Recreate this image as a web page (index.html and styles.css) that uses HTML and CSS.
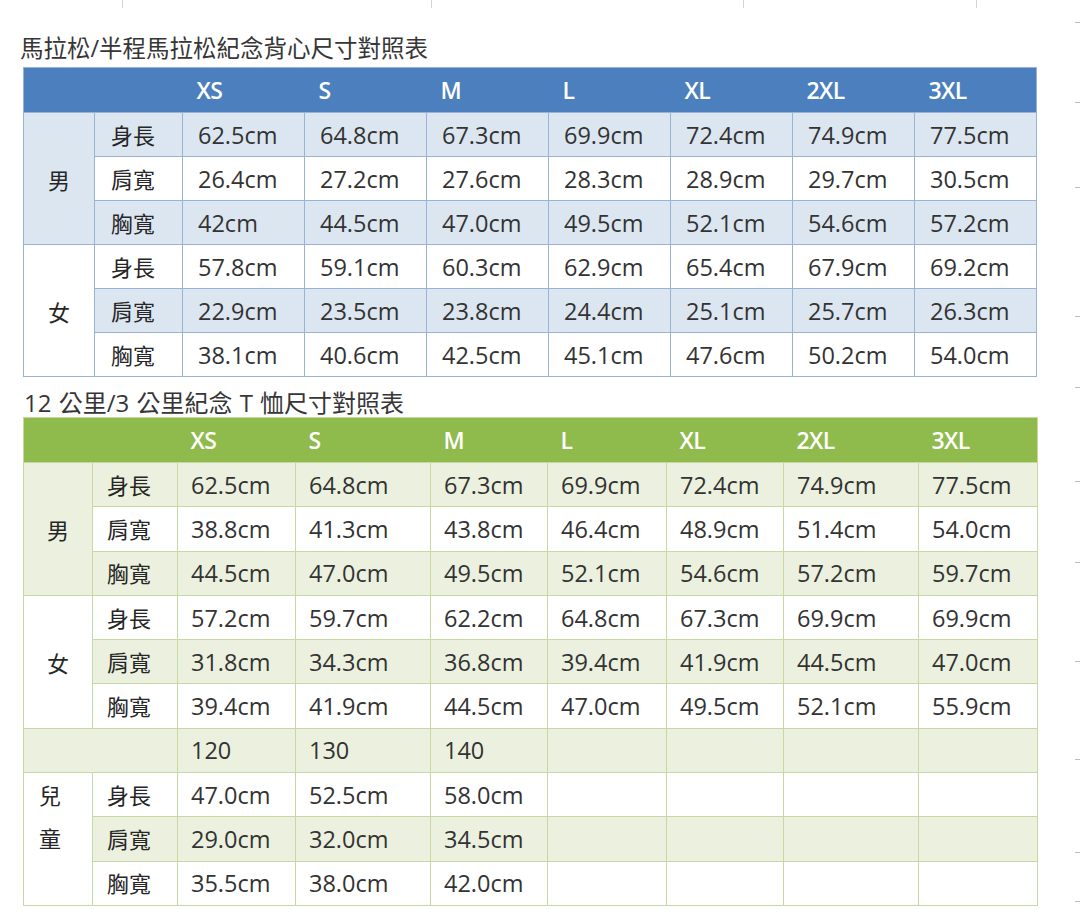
FILE: index.html
```html
<!DOCTYPE html>
<html lang="zh-Hant">
<head>
<meta charset="utf-8">
<title>尺寸對照表</title>
<link rel="stylesheet" href="styles.css">
</head>
<body>
<div class="sheet">
  <main class="content">
    <div class="topmarks"><span></span><span></span><span></span><span></span><span></span></div>

    <h2 class="title title-1">馬拉松/半程馬拉松紀念背心尺寸對照表</h2>
    <table class="size-table blue">
      <colgroup>
        <col class="c-g1"><col class="c-l1">
        <col class="c-d"><col class="c-d"><col class="c-d"><col class="c-d"><col class="c-d"><col class="c-d"><col class="c-d">
      </colgroup>
      <thead>
        <tr><th></th><th></th><th>XS</th><th>S</th><th>M</th><th>L</th><th>XL</th><th>2XL</th><th>3XL</th></tr>
      </thead>
      <tbody>
        <tr class="alt"><td class="gender" rowspan="3">男</td><td class="label">身長</td><td>62.5cm</td><td>64.8cm</td><td>67.3cm</td><td>69.9cm</td><td>72.4cm</td><td>74.9cm</td><td>77.5cm</td></tr>
        <tr><td class="label">肩寬</td><td>26.4cm</td><td>27.2cm</td><td>27.6cm</td><td>28.3cm</td><td>28.9cm</td><td>29.7cm</td><td>30.5cm</td></tr>
        <tr class="alt"><td class="label">胸寬</td><td>42cm</td><td>44.5cm</td><td>47.0cm</td><td>49.5cm</td><td>52.1cm</td><td>54.6cm</td><td>57.2cm</td></tr>
        <tr><td class="gender plain" rowspan="3">女</td><td class="label">身長</td><td>57.8cm</td><td>59.1cm</td><td>60.3cm</td><td>62.9cm</td><td>65.4cm</td><td>67.9cm</td><td>69.2cm</td></tr>
        <tr class="alt"><td class="label">肩寬</td><td>22.9cm</td><td>23.5cm</td><td>23.8cm</td><td>24.4cm</td><td>25.1cm</td><td>25.7cm</td><td>26.3cm</td></tr>
        <tr><td class="label">胸寬</td><td>38.1cm</td><td>40.6cm</td><td>42.5cm</td><td>45.1cm</td><td>47.6cm</td><td>50.2cm</td><td>54.0cm</td></tr>
      </tbody>
    </table>

    <h2 class="title title-2">12 公里/3 公里紀念 T 恤尺寸對照表</h2>
    <table class="size-table green">
      <colgroup>
        <col class="g-g1"><col class="g-l1">
        <col class="g-xs"><col class="g-s"><col class="g-m"><col class="g-l"><col class="g-xl"><col class="g-2xl"><col class="g-3xl">
      </colgroup>
      <thead>
        <tr><th></th><th></th><th>XS</th><th>S</th><th>M</th><th>L</th><th>XL</th><th>2XL</th><th>3XL</th></tr>
      </thead>
      <tbody>
        <tr class="alt"><td class="gender" rowspan="3">男</td><td class="label">身長</td><td>62.5cm</td><td>64.8cm</td><td>67.3cm</td><td>69.9cm</td><td>72.4cm</td><td>74.9cm</td><td>77.5cm</td></tr>
        <tr><td class="label">肩寬</td><td>38.8cm</td><td>41.3cm</td><td>43.8cm</td><td>46.4cm</td><td>48.9cm</td><td>51.4cm</td><td>54.0cm</td></tr>
        <tr class="alt"><td class="label">胸寬</td><td>44.5cm</td><td>47.0cm</td><td>49.5cm</td><td>52.1cm</td><td>54.6cm</td><td>57.2cm</td><td>59.7cm</td></tr>
        <tr><td class="gender plain" rowspan="3">女</td><td class="label">身長</td><td>57.2cm</td><td>59.7cm</td><td>62.2cm</td><td>64.8cm</td><td>67.3cm</td><td>69.9cm</td><td>69.9cm</td></tr>
        <tr class="alt"><td class="label">肩寬</td><td>31.8cm</td><td>34.3cm</td><td>36.8cm</td><td>39.4cm</td><td>41.9cm</td><td>44.5cm</td><td>47.0cm</td></tr>
        <tr><td class="label">胸寬</td><td>39.4cm</td><td>41.9cm</td><td>44.5cm</td><td>47.0cm</td><td>49.5cm</td><td>52.1cm</td><td>55.9cm</td></tr>
        <tr class="alt"><td class="span-head" colspan="2"></td><td>120</td><td>130</td><td>140</td><td></td><td></td><td></td><td></td></tr>
        <tr><td class="kids" rowspan="3">兒<br>童</td><td class="label">身長</td><td>47.0cm</td><td>52.5cm</td><td>58.0cm</td><td></td><td></td><td></td><td></td></tr>
        <tr class="alt"><td class="label">肩寬</td><td>29.0cm</td><td>32.0cm</td><td>34.5cm</td><td></td><td></td><td></td><td></td></tr>
        <tr><td class="label">胸寬</td><td>35.5cm</td><td>38.0cm</td><td>42.0cm</td><td></td><td></td><td></td><td></td></tr>
      </tbody>
    </table>
  </main>
  <aside class="ruler">
    <i></i><i></i><i></i><i></i><i></i><i></i><i></i><i></i><i></i><i></i><i></i>
  </aside>
</div>
</body>
</html>
```
FILE: styles.css
```css
* { box-sizing: border-box; }

html, body {
  margin: 0;
  padding: 0;
  background: #ffffff;
}

body {
  font-family: "Open Sans", "Noto Sans CJK TC", sans-serif;
  color: #333333;
}

.sheet {
  display: flex;
  width: 1080px;
  height: 922px;
  overflow: hidden;
}

.content {
  flex: 1;
  padding-left: 23px;
}

/* faint cut-off lines at the very top */
.topmarks {
  display: grid;
  grid-template-columns: 122px 309px 312px 233px 1fr;
  height: 8px;
  margin-left: -23px;
}
.topmarks span + span {
  border-left: 1px solid #d4d4d4;
}

.title {
  margin: 0;
  font-weight: 400;
  font-size: 23.5px;
  color: #363636;
  white-space: nowrap;
}
.title-1 {
  margin: 24px 0 3px -3px;
  line-height: 32px;
}
.title-2 {
  margin: 11px 0 0 1px;
  line-height: 29px;
  font-size: 24px;
  word-spacing: 1px;
}

.size-table {
  width: 1014px;
  table-layout: fixed;
  border-collapse: collapse;
}

.size-table th {
  height: 45px;
  padding: 0 0 0 13px;
  text-align: left;
  font-size: 23px;
  font-weight: 600;
  color: #ffffff;
  border: none;
  letter-spacing: -0.6px;
}

.size-table td {
  height: 44px;
  padding: 0 0 0 14px;
  font-size: 23.5px;
  line-height: 30px;
  color: #333333;
  white-space: nowrap;
  vertical-align: middle;
}

.size-table td.label,
.size-table td.gender,
.size-table td.kids {
  font-family: "Noto Sans CJK TC", sans-serif;
  font-size: 22px;
  font-weight: 400;
  color: #262626;
}

.size-table td.label {
  padding-left: 15px;
  padding-bottom: 2px;
}

.size-table td.gender {
  text-align: center;
  padding: 0;
}

.size-table td.kids {
  vertical-align: top;
  line-height: 43px;
  padding: 0 0 0 15px;
}

/* blue table */
.blue { border: 1px solid #9ab3d5; }
.blue thead tr { background: #4b7fbd; }
.blue td { border: 1px solid #9ab3d5; }
.blue tr.alt td { background: #dce6f1; }
.blue td.gender { background: #dce6f1; }
.blue td.gender.plain { background: #ffffff; }
.blue th { padding-left: 14px; }
.blue td { padding-left: 15px; }
.blue td.label { padding-left: 16px; }

.c-g1 { width: 71px; }
.c-l1 { width: 88px; }
.c-d { width: 122px; }

/* green table */
.green { border: 1px solid #c6d9a3; }
.green thead tr { background: #8fba4c; }
.green td { border: 1px solid #c6d9a3; padding-left: 13px; }
.green tr.alt td { background: #ebf1de; }
.green td.gender { background: #ebf1de; }
.green td.gender.plain { background: #ffffff; }
.green td.kids { background: #ffffff; }
.green td.label { padding-left: 14px; }
.green tbody td { height: 44.3px; }

.g-g1 { width: 69px; }
.g-l1 { width: 85px; }
.g-xs { width: 118px; }
.g-s { width: 135px; }
.g-m { width: 117px; }
.g-l { width: 119px; }
.g-xl { width: 117px; }
.g-2xl { width: 135px; }
.g-3xl { width: 119px; }

/* page ruler ticks on the right edge */
.ruler {
  width: 6px;
  display: grid;
  grid-template-rows: 23px 80px 85px 129px 71px 94px 81px 99px 98px 93px 49px;
}
.ruler i {
  align-self: end;
  height: 1px;
  margin-left: 1px;
  background: #bdbdbd;
}
```
